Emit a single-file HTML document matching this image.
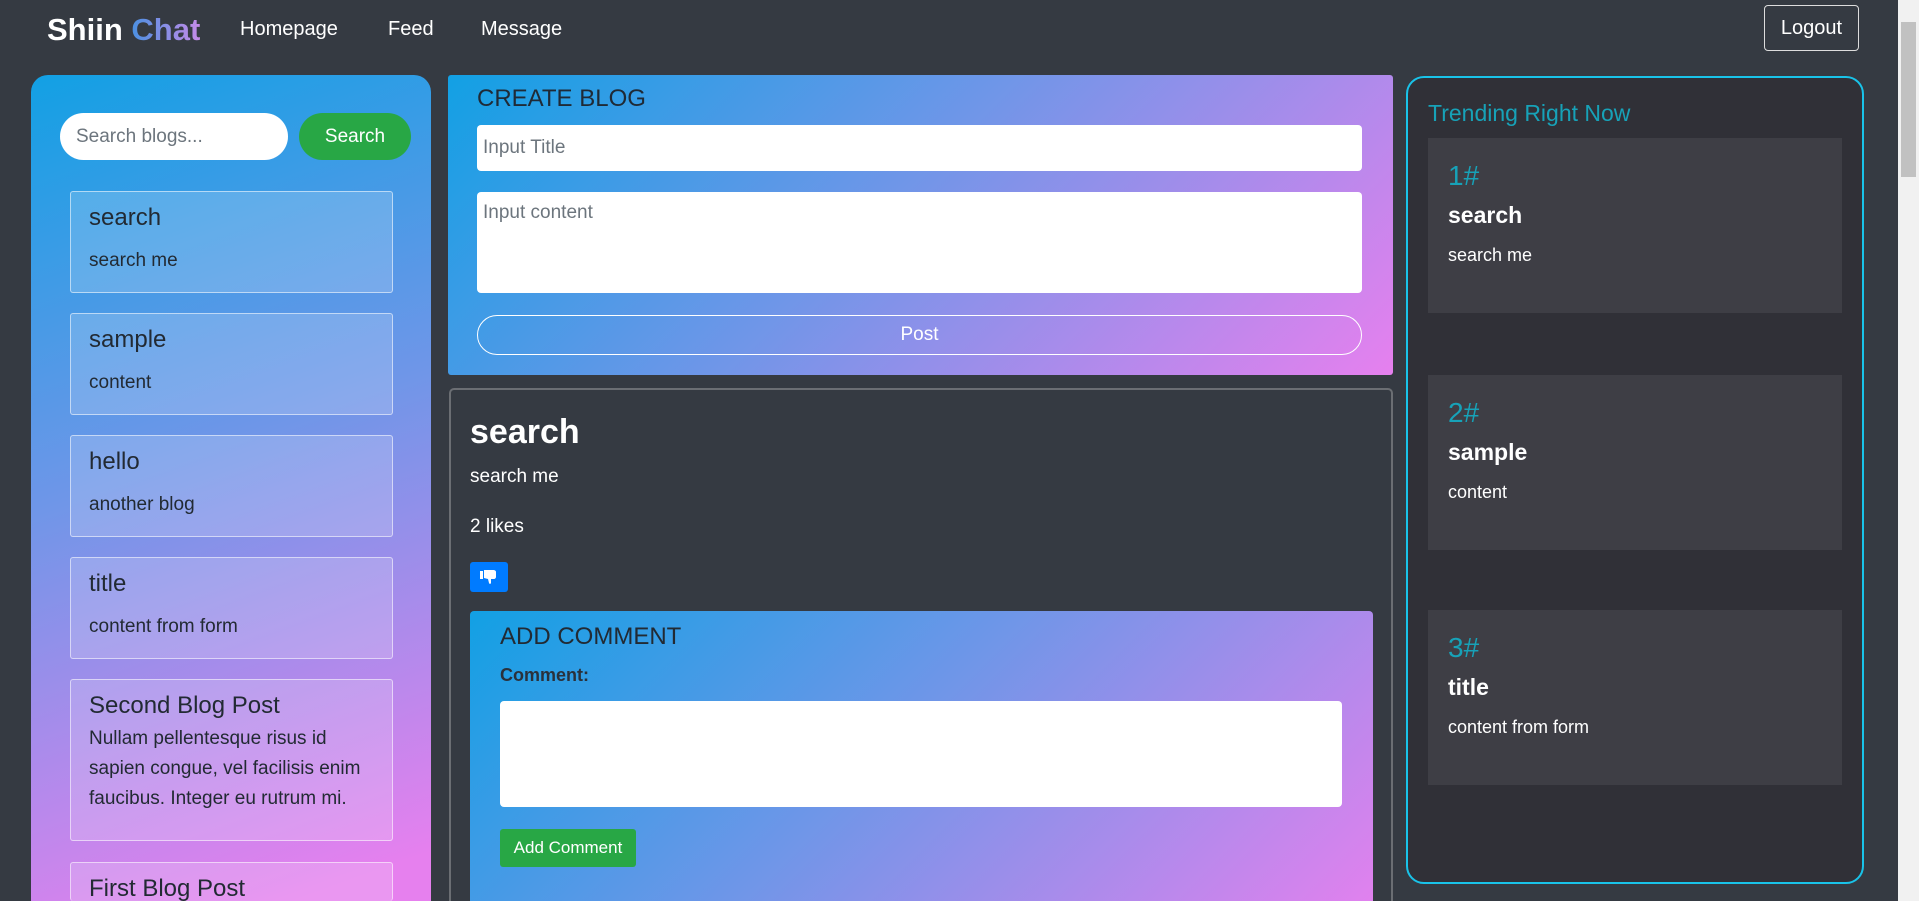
<!DOCTYPE html>
<html style="width:1919px;height:901px;overflow:hidden"><head><meta charset="utf-8"><style>
*{box-sizing:border-box;margin:0;padding:0}
body{width:1919px;height:901px;overflow:hidden;background:#353a42;font-family:"Liberation Sans",sans-serif;color:#fff;position:relative}
.a{position:absolute}
.grad{background:linear-gradient(135deg,#12a0e4 0%,#6f96e8 45%,#e680ee 100%)}
.nav{font-size:20px;top:18px}
.card{position:absolute;left:70px;width:323px;border:1px solid rgba(255,255,255,.55);background:rgba(255,255,255,.18);border-radius:3px;color:#222a33;padding:12px 18px}
.card h5{font-size:24px;font-weight:normal;margin:0 0 14px}
.card p{font-size:19px;line-height:30px}
.tc{position:absolute;left:1428px;width:414px;height:175px;background:#3e3e45;padding:22px 20px}
.tc .n{color:#17a2b8;font-size:28px}
.tc .t{font-size:23px;font-weight:bold;margin-top:10px}
.tc .d{font-size:18px;margin-top:16px}
</style></head><body>
<div class="a" style="left:47px;top:12px;font-size:31px;font-weight:bold">Shiin <span style="background:linear-gradient(90deg,#4a90e2,#c58be8);-webkit-background-clip:text;color:transparent">Chat</span></div>
<div class="a nav" style="left:240px">Homepage</div>
<div class="a nav" style="left:388px">Feed</div>
<div class="a nav" style="left:481px">Message</div>
<div class="a" style="left:1764px;top:5px;width:95px;height:46px;border:1px solid #ddd;border-radius:4px;font-size:20px;line-height:44px;text-align:center">Logout</div>
<div class="a" style="left:1898px;top:0;width:21px;height:901px;background:#f1f1f1"></div>
<div class="a" style="left:1901px;top:22px;width:15px;height:155px;background:#c1c1c1"></div>

<div class="a grad" style="left:31px;top:75px;width:400px;height:826px;border-radius:17px 17px 0 0;background:linear-gradient(160deg,#12a0e4 0%,#6f96e8 45%,#e680ee 95%)">
<div class="a" style="left:29px;top:38px;width:228px;height:47px;background:#fff;border-radius:24px;color:#6c757d;font-size:19px;line-height:47px;padding-left:16px">Search blogs...</div>
<div class="a" style="left:268px;top:38px;width:112px;height:47px;background:#28a745;border-radius:24px;font-size:19px;line-height:47px;text-align:center">Search</div>
</div>
<div class="card" style="top:191px;height:102px"><h5>search</h5><p>search me</p></div>
<div class="card" style="top:313px;height:102px"><h5>sample</h5><p>content</p></div>
<div class="card" style="top:435px;height:102px"><h5>hello</h5><p>another blog</p></div>
<div class="card" style="top:557px;height:102px"><h5>title</h5><p>content from form</p></div>
<div class="card" style="top:679px;height:162px"><h5 style="margin-bottom:4px">Second Blog Post</h5><p>Nullam pellentesque risus id sapien congue, vel facilisis enim faucibus. Integer eu rutrum mi.</p></div>
<div class="card" style="top:862px;height:39px;border-bottom:none"><h5>First Blog Post</h5></div>

<div class="a grad" style="left:448px;top:75px;width:945px;height:300px;border-radius:3px">
<div class="a" style="left:29px;top:10px;font-size:24px;color:#1f2a36">CREATE BLOG</div>
<div class="a" style="left:29px;top:50px;width:885px;height:46px;background:#fff;border-radius:4px;color:#6c757d;font-size:19px;line-height:46px;padding-left:6px">Input Title</div>
<div class="a" style="left:29px;top:117px;width:885px;height:101px;background:#fff;border-radius:4px;color:#6c757d;font-size:19px;padding:10px 6px">Input content</div>
<div class="a" style="left:29px;top:240px;width:885px;height:40px;border:1px solid #fff;border-radius:20px;font-size:19px;line-height:38px;text-align:center">Post</div>
</div>

<div class="a" style="left:449px;top:388px;width:944px;height:513px;border:2px solid #6b6e73;border-bottom:none;border-radius:5px 5px 0 0;overflow:hidden">
<div class="a" style="left:19px;top:23px;font-size:34px;font-weight:bold">search</div>
<div class="a" style="left:19px;top:76px;font-size:19px">search me</div>
<div class="a" style="left:19px;top:126px;font-size:19px">2 likes</div>
<div class="a" style="left:19px;top:172px;width:38px;height:30px;background:#007bff;border-radius:3px">
<svg width="38" height="30" viewBox="0 0 38 30"><path d="M10 9h3v8h-3zM14 8h9c2 0 3 1 3 2v5c0 1-1 2-2 2h-3v4c0 1-2 1-2 0l-1-4-4-1z" fill="#fff"/></svg></div>
<div class="a grad" style="left:19px;top:221px;width:903px;height:320px;border-radius:4px">
<div class="a" style="left:30px;top:12px;font-size:24px;color:#222a33">ADD COMMENT</div>
<div class="a" style="left:30px;top:54px;font-size:18px;font-weight:bold;color:#2a313b">Comment:</div>
<div class="a" style="left:30px;top:90px;width:842px;height:106px;background:#fff;border-radius:4px"></div>
<div class="a" style="left:30px;top:218px;width:136px;height:38px;background:#28a745;border-radius:3px;font-size:17px;line-height:38px;text-align:center">Add Comment</div>
</div>
</div>

<div class="a" style="left:1406px;top:76px;width:458px;height:808px;border:2px solid #19c3e9;border-radius:18px;background:#303037"></div>
<div class="a" style="left:1428px;top:100px;font-size:23px;color:#17a2b8">Trending Right Now</div>
<div class="tc" style="top:138px"><div class="n">1#</div><div class="t">search</div><div class="d">search me</div></div>
<div class="tc" style="top:375px"><div class="n">2#</div><div class="t">sample</div><div class="d">content</div></div>
<div class="tc" style="top:610px"><div class="n">3#</div><div class="t">title</div><div class="d">content from form</div></div>
</body></html>
